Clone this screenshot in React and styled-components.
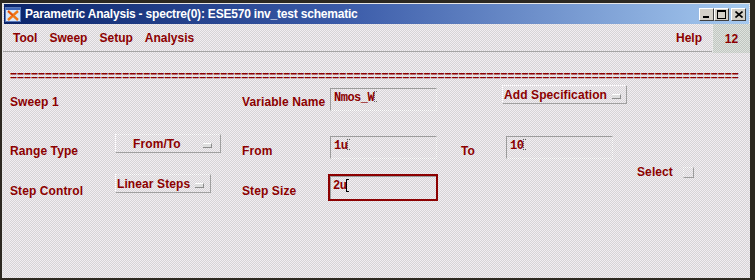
import React from "react";
import styled, { createGlobalStyle } from "styled-components";

const RED = "#8c0000";

const GlobalStyle = createGlobalStyle`
  html, body {
    margin: 0;
    padding: 0;
    background: #2c2820;
    font-family: "Liberation Sans", Arial, sans-serif;
  }
`;

const Window = styled.div`
  margin: 3px 0 0 2px;
  width: 747px;
  height: 274px;
  display: flex;
  flex-direction: column;
  border-top: 1px solid #e6e6e6;
  border-left: 1px solid #e6e6e6;
  background-color: #e3e0e3;
  background-image: repeating-conic-gradient(#f2eef2 0 25%, #d6d4d6 0 50%);
  background-size: 2px 2px;
  overflow: hidden;
`;

const TitleBar = styled.div`
  height: 20px;
  margin: 0 1px 0 1px;
  padding: 0 3px 0 1px;
  display: flex;
  align-items: center;
  gap: 4px;
  background: linear-gradient(90deg, #0a246a 0%, #3a5aa8 45%, #a6caf0 100%);
`;

const Title = styled.div`
  flex: 1;
  color: #ffffff;
  font-weight: 700;
  font-size: 12px;
  letter-spacing: -0.2px;
  white-space: nowrap;
`;

const Controls = styled.div`
  display: flex;
  align-items: center;
`;

const ControlButton = styled.div`
  width: 13px;
  height: 11px;
  margin-left: ${(p) => (p.$gap ? "2px" : "0")};
  display: flex;
  align-items: center;
  justify-content: center;
  background: #d4d0c8;
  border-top: 1px solid #ffffff;
  border-left: 1px solid #ffffff;
  border-right: 1px solid #404040;
  border-bottom: 1px solid #404040;
`;

const MenuBar = styled.div`
  height: 27px;
  display: flex;
  align-items: stretch;
  border-bottom: 1px solid #a4a4a4;
`;

const Menu = styled.div`
  flex: 1;
  display: flex;
  align-items: center;
  gap: 12px;
  padding: 0 10px 0 10px;
`;

const MenuItem = styled.span`
  color: ${RED};
  font-weight: 700;
  font-size: 12px;
  margin-left: ${(p) => (p.$right ? "auto" : "0")};
`;

const PageTab = styled.div`
  width: 37px;
  margin-bottom: -2px;
  display: flex;
  align-items: center;
  justify-content: center;
  color: ${RED};
  font-weight: 700;
  font-size: 12px;
  border-left: 1px solid #e8e8e8;
  background-color: #ccd2cc;
  background-image: repeating-conic-gradient(#dfe3df 0 25%, #c0c6c0 0 50%);
  background-size: 2px 2px;
`;

const Content = styled.div`
  padding: 0 0 0 7px;
`;

const Rule = styled.div`
  margin-top: 17px;
  height: 14px;
  line-height: 14px;
  white-space: nowrap;
  color: ${RED};
  font-weight: 700;
  font-size: 12px;
`;

const Row = styled.div`
  display: grid;
  grid-template-columns: 105px 127px 88px 131px 43px 133px 48px 1fr;
  height: ${(p) => p.$h}px;
  margin-top: ${(p) => p.$top}px;
`;

const Label = styled.div`
  align-self: start;
  margin-top: ${(p) => p.$top ?? 10}px;
  color: ${RED};
  font-weight: 700;
  font-size: 12px;
  line-height: 14px;
  letter-spacing: 0.1px;
  white-space: nowrap;
`;

const Field = styled.div`
  align-self: start;
  box-sizing: border-box;
  width: ${(p) => p.$w}px;
  height: ${(p) => p.$h ?? 23}px;
  margin-top: ${(p) => p.$top ?? 0}px;
  margin-left: ${(p) => p.$left ?? 0}px;
  padding: 2px 0 0 3px;
  display: flex;
  align-items: flex-start;
  color: ${RED};
  font-family: "Liberation Mono", "Courier New", monospace;
  font-weight: 700;
  font-size: 12px;
  letter-spacing: -0.5px;
  line-height: 14px;
  border-top: 1px solid #9c9c9c;
  border-left: 1px solid #9c9c9c;
  border-right: 1px dotted #ffffff;
  border-bottom: 1px dotted #ffffff;
  ${(p) =>
    p.$focus &&
    `
    border: 2px solid ${RED};
    box-shadow: inset 1px 1px 0 #9c9c9c;
    padding: 3px 0 0 3px;
  `}
`;

const Caret = styled.span`
  display: inline-block;
  box-sizing: border-box;
  width: 3px;
  height: ${(p) => (p.$solid ? 13 : 11)}px;
  border-left: 1px ${(p) => (p.$solid ? "solid #000" : "dotted #606060")};
  border-top: 1px ${(p) => (p.$solid ? "solid #000" : "dotted #606060")};
  border-bottom: 1px ${(p) => (p.$solid ? "solid #000" : "dotted #606060")};
`;

const DropButton = styled.div`
  align-self: start;
  box-sizing: border-box;
  width: ${(p) => p.$w}px;
  height: 19px;
  margin-top: ${(p) => p.$top ?? 0}px;
  margin-left: ${(p) => p.$left ?? 0}px;
  padding: 0 ${(p) => (p.$center ? 8 : 4)}px 0 ${(p) => (p.$center ? 17 : 1)}px;
  display: flex;
  align-items: center;
  justify-content: ${(p) => (p.$center ? "space-between" : "flex-start")};
  gap: 5px;
  color: ${RED};
  font-weight: 700;
  font-size: 12px;
  letter-spacing: 0.1px;
  white-space: nowrap;
  border-top: 1px dotted #ffffff;
  border-left: 1px dotted #ffffff;
  border-right: 1px solid #a0a0a0;
  border-bottom: 1px solid #a0a0a0;
`;

const Indicator = styled.span`
  display: inline-block;
  width: 8px;
  height: 3px;
  margin-top: 4px;
  background: #dedede;
  border-top: 1px solid #ffffff;
  border-right: 1px solid #8c8c8c;
  border-bottom: 1px solid #8c8c8c;
`;

const SelectCell = styled.div`
  grid-column: 7 / span 2;
  align-self: start;
  margin-top: -8px;
  display: flex;
  align-items: center;
  gap: 10px;
`;

const CheckBox = styled.span`
  box-sizing: border-box;
  width: 11px;
  height: 11px;
  border-top: 1px dotted #ffffff;
  border-left: 1px dotted #ffffff;
  border-right: 1px solid #9c9c9c;
  border-bottom: 1px solid #9c9c9c;
`;

const AppIcon = () => (
  <svg width="16" height="15" viewBox="0 0 16 15">
    <rect x="0.5" y="0.5" width="15" height="14" fill="#d8e8fc" stroke="#5878b8" />
    <rect x="1" y="1" width="14" height="2" fill="#4068b8" />
    <path d="M3 4 L13 13 M13 4 L3 13" stroke="#f07818" strokeWidth="2.4" />
    <path d="M3 4 L8 8.5" stroke="#d83010" strokeWidth="1" />
  </svg>
);

const MinGlyph = () => (
  <svg width="7" height="7" viewBox="0 0 7 7">
    <rect x="0" y="5" width="6" height="2" fill="#000" />
  </svg>
);

const MaxGlyph = () => (
  <svg width="9" height="9" viewBox="0 0 9 9">
    <rect x="0.5" y="0.5" width="8" height="8" fill="none" stroke="#000" />
    <rect x="0" y="0" width="9" height="2" fill="#000" />
  </svg>
);

const CloseGlyph = () => (
  <svg width="8" height="7" viewBox="0 0 8 7">
    <path d="M0.5 0.5 L7.5 6.5 M7.5 0.5 L0.5 6.5" stroke="#000" strokeWidth="1.6" />
  </svg>
);

const App = () => {
  return (
    <>
      <GlobalStyle />
      <Window>
        <TitleBar>
          <AppIcon />
          <Title>Parametric Analysis - spectre(0): ESE570 inv_test schematic</Title>
          <Controls>
            <ControlButton><MinGlyph /></ControlButton>
            <ControlButton><MaxGlyph /></ControlButton>
            <ControlButton $gap><CloseGlyph /></ControlButton>
          </Controls>
        </TitleBar>

        <MenuBar>
          <Menu>
            <MenuItem>Tool</MenuItem>
            <MenuItem>Sweep</MenuItem>
            <MenuItem>Setup</MenuItem>
            <MenuItem>Analysis</MenuItem>
            <MenuItem $right>Help</MenuItem>
          </Menu>
          <PageTab>12</PageTab>
        </MenuBar>

        <Content>
          <Rule>{"=".repeat(104)}</Rule>

          <Row $h={27} $top={2}>
            <Label>Sweep 1</Label>
            <span />
            <Label>Variable Name</Label>
            <Field $w={107} $top={3}>
              Nmos_W<Caret />
            </Field>
            <span />
            <DropButton $w={125} $left={-2}>
              Add Specification <Indicator />
            </DropButton>
          </Row>

          <Row $h={27} $top={22}>
            <Label>Range Type</Label>
            <DropButton $w={106} $center>
              From/To <Indicator />
            </DropButton>
            <Label>From</Label>
            <Field $w={107} $top={2}>
              1u<Caret />
            </Field>
            <Label>To</Label>
            <Field $w={107} $top={2} $left={2}>
              10<Caret />
            </Field>
          </Row>

          <Row $h={28} $top={12}>
            <Label $top={11}>Step Control</Label>
            <DropButton $w={96} $top={1}>
              Linear Steps <Indicator />
            </DropButton>
            <Label $top={11}>Step Size</Label>
            <Field $w={110} $h={27} $top={1} $left={-2} $focus>
              2u<Caret $solid />
            </Field>
            <span />
            <span />
            <SelectCell>
              <Label $top={0}>Select</Label>
              <CheckBox />
            </SelectCell>
          </Row>
        </Content>
      </Window>
    </>
  );
};

export default App;
